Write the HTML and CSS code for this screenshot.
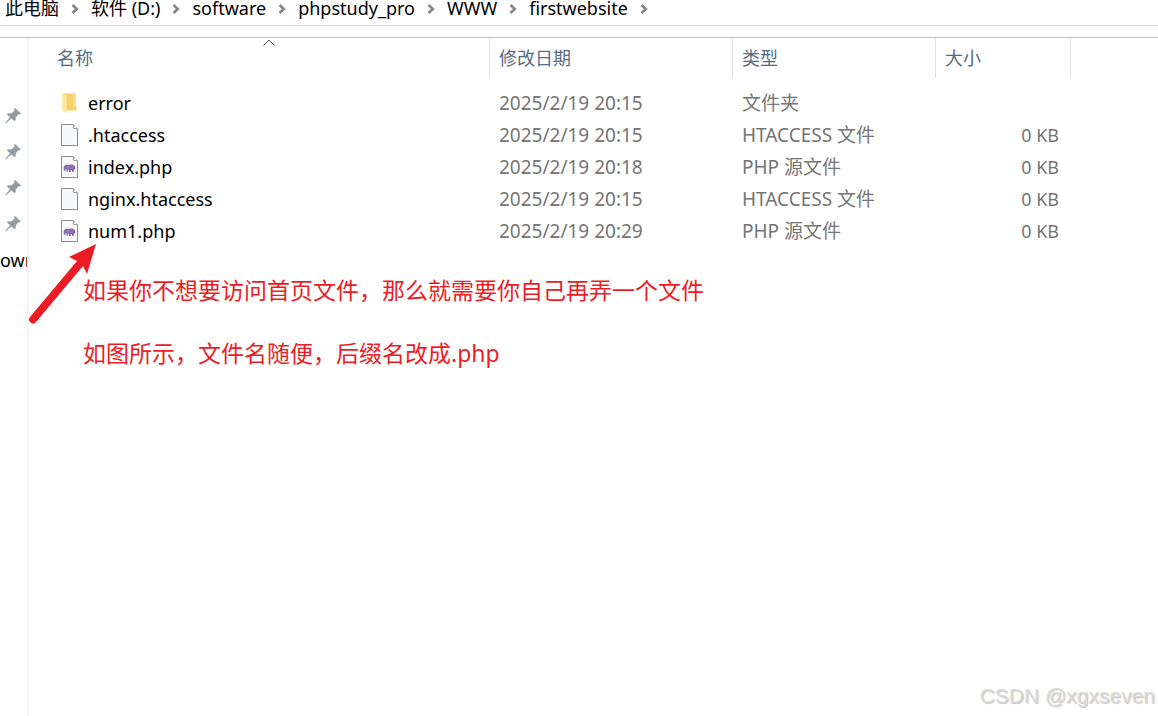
FILE: index.html
```html
<!DOCTYPE html>
<html lang="zh-CN">
<head>
    <meta charset="UTF-8">
    <title>firstwebsite</title>
    <link rel="stylesheet" href="styles.css">
</head>

<body>

    <!-- 图标 -->
    <svg class="defs" aria-hidden="true">
        <symbol id="chevron" viewBox="0 0 8 10">
            <path d="M1.5 1 L5.8 5 L1.5 9" fill="none" stroke="#858585" stroke-width="2.6"/>
        </symbol>
        <symbol id="pin" viewBox="0 0 16 16">
            <path d="M10 0 L16 5.4 L14.4 6.6 L13.6 6.2 L10.8 9.2 L10.6 12.4 L9.4 13 L6.2 10.4 L0.8 15.6 L0.2 15 L5 9.2 L2 6.6 L2.8 5.2 L6.6 5.2 L9.6 2.6 L9 1.2 Z" fill="#929ca3"/>
        </symbol>
        <symbol id="folder" viewBox="0 0 18 22">
            <path d="M2 1.5 H14.5 V14 L15.5 14.5 V18.5 H5 L2 17 Z" fill="#f7d26c"/>
            <path d="M12 1.5 H14.5 V14 L12 18.5 Z" fill="#f9dc83"/>
            <path d="M1 1.5 L5.5 4 V21.5 L1 18.5 Z" fill="#fde9a6"/>
        </symbol>
        <symbol id="file" viewBox="0 0 18 22">
            <path d="M0.5 0.5 H12.5 L16.5 4.5 V21.5 H0.5 Z" fill="#f7f8f9" stroke="#8b8b8b"/>
            <path d="M12.5 0.5 V4.5 H16.5" fill="#ffffff" stroke="#a3a3a3"/>
        </symbol>
        <symbol id="php" viewBox="0 0 18 22">
            <use href="#file"/>
            <path d="M3 10.4 C3.6 8.8 5.4 8.4 7 9 C8.6 8.2 11.6 8.2 12.8 9.2 C14.2 9.8 14.6 11.4 14.2 13.4 H13.2 V12.8 L12.8 15.8 H11 V14.2 H9.8 V16 H8 V14 L6.8 14 V15.8 H5.4 V13.6 L4.4 13.2 L4 14.8 H3 C2.6 13.2 2.6 11.6 3 10.4 Z" fill="#8d68b0"/>
            <path d="M7.4 9.6 C6.6 11 6.8 12.4 8.2 13" fill="none" stroke="#b79bd3" stroke-width="0.7"/>
        </symbol>
    </svg>

    <nav class="address">
        <a href="#">此电脑</a><svg class="chevron"><use href="#chevron"/></svg>
        <a href="#">软件 (D:)</a><svg class="chevron"><use href="#chevron"/></svg>
        <a href="#">software</a><svg class="chevron"><use href="#chevron"/></svg>
        <a href="#">phpstudy_pro</a><svg class="chevron"><use href="#chevron"/></svg>
        <a href="#">WWW</a><svg class="chevron"><use href="#chevron"/></svg>
        <a href="#">firstwebsite</a><svg class="chevron"><use href="#chevron"/></svg>
    </nav>

    <div class="explorer">
        <aside class="sidebar">
            <div class="quick"><svg class="pin"><use href="#pin"/></svg></div>
            <div class="quick"><svg class="pin"><use href="#pin"/></svg></div>
            <div class="quick"><svg class="pin"><use href="#pin"/></svg></div>
            <div class="quick"><svg class="pin"><use href="#pin"/></svg></div>
            <div class="quick quick-text">own</div>
        </aside>

        <main class="content">
            <table class="files">
                <colgroup>
                    <col class="col-name">
                    <col class="col-date">
                    <col class="col-type">
                    <col class="col-size">
                    <col>
                </colgroup>
                <thead>
                    <tr>
                        <th>
                            <button type="button">名称</button>
                            <svg class="sort" viewBox="0 0 12 7"><path d="M0.5 6.5 L6 1 L11.5 6.5" fill="none" stroke="#555555"/></svg>
                        </th>
                        <th><button type="button">修改日期</button></th>
                        <th><button type="button">类型</button></th>
                        <th><button type="button">大小</button></th>
                        <td></td>
                    </tr>
                </thead>
                <tbody>
                    <tr>
                        <td><a class="file" href="#"><svg class="icon"><use href="#folder"/></svg>error</a></td>
                        <td class="info">2025/2/19 20:15</td>
                        <td class="info">文件夹</td>
                        <td class="size"></td>
                        <td></td>
                    </tr>
                    <tr>
                        <td><a class="file" href="#"><svg class="icon"><use href="#file"/></svg>.htaccess</a></td>
                        <td class="info">2025/2/19 20:15</td>
                        <td class="info">HTACCESS 文件</td>
                        <td class="size">0 KB</td>
                        <td></td>
                    </tr>
                    <tr>
                        <td><a class="file" href="#"><svg class="icon"><use href="#php"/></svg>index.php</a></td>
                        <td class="info">2025/2/19 20:18</td>
                        <td class="info">PHP 源文件</td>
                        <td class="size">0 KB</td>
                        <td></td>
                    </tr>
                    <tr>
                        <td><a class="file" href="#"><svg class="icon"><use href="#file"/></svg>nginx.htaccess</a></td>
                        <td class="info">2025/2/19 20:15</td>
                        <td class="info">HTACCESS 文件</td>
                        <td class="size">0 KB</td>
                        <td></td>
                    </tr>
                    <tr>
                        <td><a class="file" href="#"><svg class="icon"><use href="#php"/></svg>num1.php</a></td>
                        <td class="info">2025/2/19 20:29</td>
                        <td class="info">PHP 源文件</td>
                        <td class="size">0 KB</td>
                        <td></td>
                    </tr>
                </tbody>
            </table>

            <div class="notes">
                <p>如果你不想要访问首页文件，那么就需要你自己再弄一个文件</p>
                <p>如图所示，文件名随便，后缀名改成.php</p>
                <!-- 指向 num1.php 的箭头 -->
                <svg class="arrow" viewBox="0 0 68 80">
                    <path d="M68 0 L59 30 L55 22 L8 78 A3.8 3.8 0 0 1 2 73 L49 17 L41 13 Z" fill="#ed1c24"/>
                </svg>
            </div>
        </main>
    </div>

    <div class="watermark">CSDN @xgxseven</div>

</body>
</html>
```

FILE: styles.css
```css
* {
    box-sizing: border-box;
}

body {
    margin: 0;
    min-height: 100vh;
    display: flex;
    flex-direction: column;
    position: relative;
    background-color: #ffffff;
    color: #000000;
    font-family: "Noto Sans", "Noto Sans CJK SC", sans-serif;
    font-size: 18px;
    line-height: 24px;
}

a {
    color: inherit;
    text-decoration: none;
}

button {
    padding: 0;
    border: none;
    background: none;
    color: inherit;
    font: inherit;
}

.defs {
    position: absolute;
    width: 0;
    height: 0;
}

/* 地址栏 */
.address {
    display: flex;
    align-items: center;
    gap: 12px;
    padding: 0 5px 9px;
    border-bottom: 1px solid #d9d9d9;
    line-height: 16px;
    white-space: nowrap;
}

.chevron {
    width: 8px;
    height: 10px;
    margin-top: 2px;
}

.explorer {
    flex: 1;
    display: flex;
    margin-top: 11px;
    border-top: 1px solid #bdbdbd;
}

/* 左侧快速访问 */
.sidebar {
    width: 29px;
    padding-top: 60px;
    border-right: 2px solid #f5f5f5;
}

.quick {
    display: flex;
    align-items: center;
    height: 36px;
    padding-left: 5px;
}

.quick-text {
    padding-left: 0;
    overflow: hidden;
}

.pin {
    width: 16px;
    height: 16px;
}

/* 文件列表 */
.content {
    flex: 1;
    padding-left: 19px;
}

.files {
    width: 100%;
    table-layout: fixed;
    border-collapse: separate;
    border-spacing: 0;
    color: #757575;
}

.col-name {
    width: 442px;
}

.col-date {
    width: 243px;
}

.col-type {
    width: 203px;
}

.col-size {
    width: 135px;
}

.files th {
    position: relative;
    height: 40px;
    padding: 0 9px;
    border-right: 1px solid #e2e2e2;
    color: #566a84;
    font-weight: 400;
    text-align: left;
}

.sort {
    position: absolute;
    top: 1px;
    left: 50%;
    width: 12px;
    height: 7px;
    transform: translateX(-50%);
}

.files tbody::before {
    content: "";
    display: block;
    height: 9px;
}

.files tbody td {
    height: 32px;
    padding: 0 9px;
    white-space: nowrap;
}

.files .info {
    font-size: 19px;
}

.files tbody .size {
    padding-right: 12px;
    text-align: right;
}

.file {
    display: flex;
    align-items: center;
    gap: 9px;
    padding-left: 4px;
    color: #000000;
}

.icon {
    width: 18px;
    height: 22px;
}

/* 红色说明文字 */
.notes {
    position: relative;
    padding: 27px 0 0 35px;
    color: #ed1c24;
    font-size: 23px;
    line-height: 32px;
}

.notes p {
    margin: 0 0 31px;
}

.arrow {
    position: absolute;
    top: -3px;
    left: -20px;
    width: 68px;
    height: 80px;
}

.watermark {
    position: absolute;
    right: 3px;
    bottom: 6px;
    color: #dadada;
    font-family: "Liberation Sans", Arial, sans-serif;
    font-size: 21px;
    line-height: 28px;
    text-shadow: 1px 1px 1px #c4c4c4;
}
```
